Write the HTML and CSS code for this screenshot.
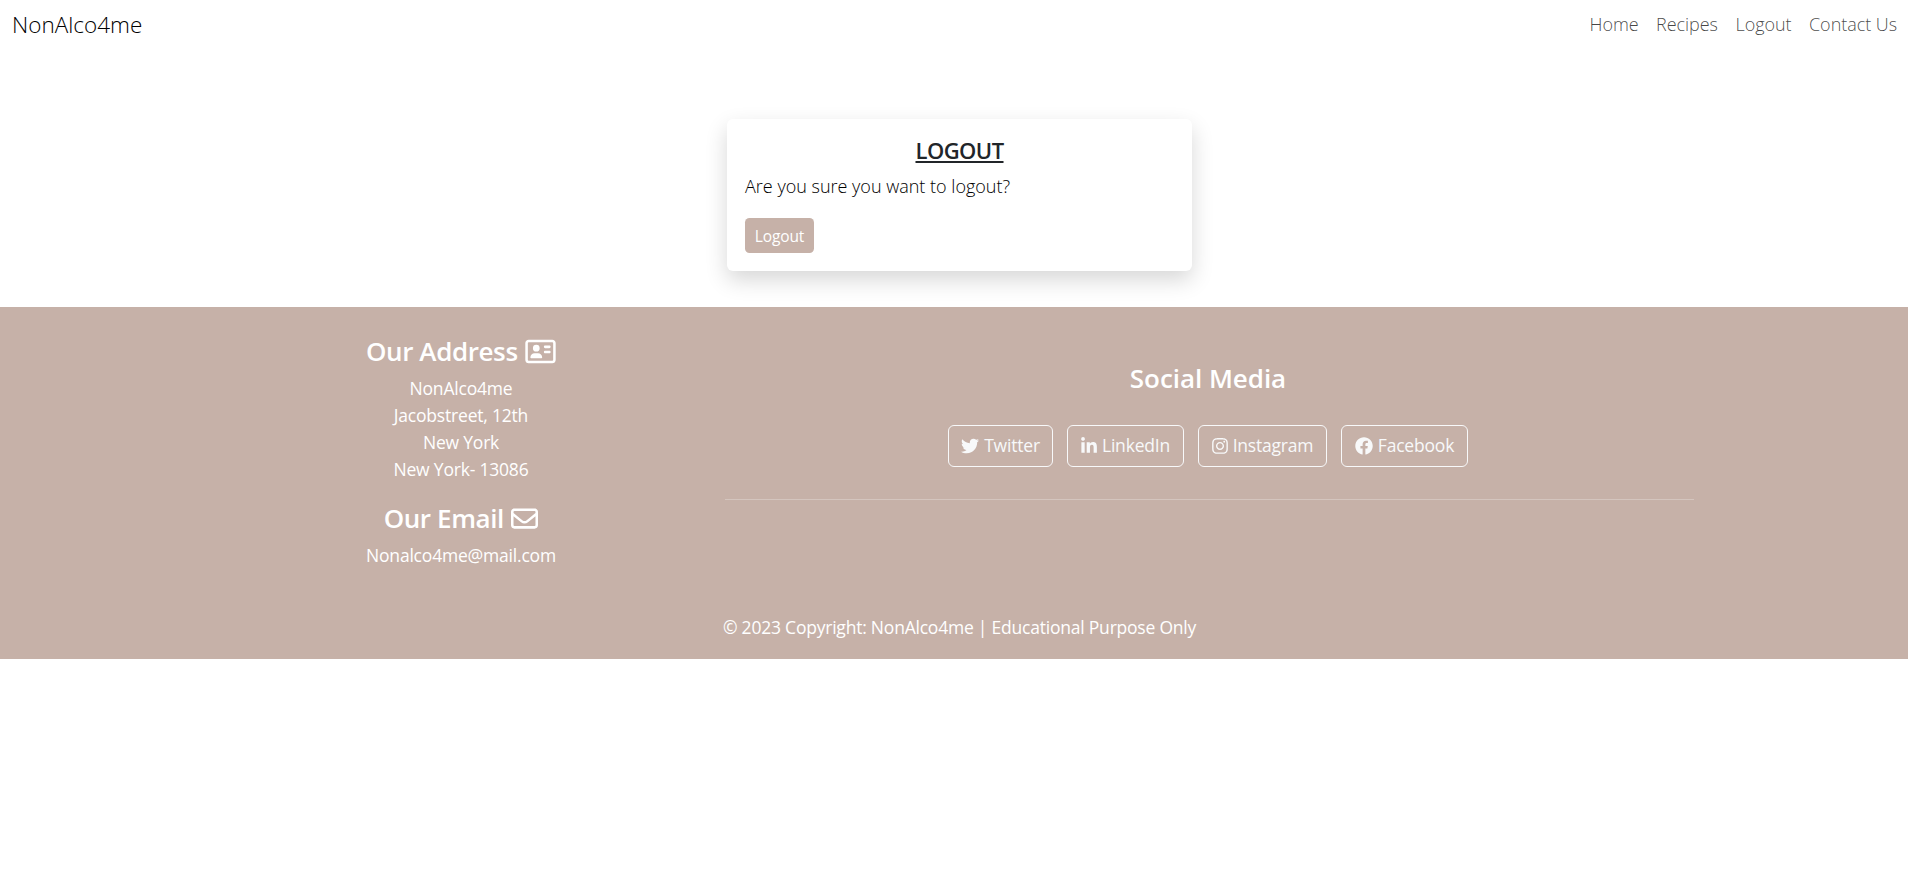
FILE: index.html
```html
<!DOCTYPE html>
<html lang="en">
<head>
<meta charset="utf-8">
<title>NonAlco4me</title>
<link rel="stylesheet" href="styles.css">
</head>
<body>
<nav class="navbar">
  <a class="brand">NonAlco4me</a>
  <ul class="nav-links">
    <li>Home</li>
    <li>Recipes</li>
    <li>Logout</li>
    <li>Contact Us</li>
  </ul>
</nav>
<main class="main">
  <section class="card">
    <h5 class="card-title">LOGOUT</h5>
    <p class="card-text">Are you sure you want to logout?</p>
    <button class="btn-logout">Logout</button>
  </section>
</main>
<footer class="footer">
  <div class="footer-cols">
    <div class="contact">
      <h4 class="heading">Our Address <svg class="icon" viewBox="0 0 576 512" width="31" height="27"><path d="M512 80c8.800 0 16 7.200 16 16V416c0 8.800-7.200 16-16 16H64c-8.800 0-16-7.200-16-16V96c0-8.800 7.200-16 16-16H512zM64 32C28.700 32 0 60.700 0 96V416c0 35.300 28.700 64 64 64H512c35.300 0 64-28.700 64-64V96c0-35.300-28.700-64-64-64H64zM208 256a64 64 0 1 0 0-128 64 64 0 1 0 0 128zm-32 32c-44.200 0-80 35.800-80 80c0 8.800 7.200 16 16 16H304c8.800 0 16-7.200 16-16c0-44.200-35.800-80-80-80H176zM376 144c-13.300 0-24 10.700-24 24s10.700 24 24 24h80c13.300 0 24-10.700 24-24s-10.700-24-24-24H376zm0 96c-13.300 0-24 10.700-24 24s10.700 24 24 24h80c13.300 0 24-10.700 24-24s-10.700-24-24-24H376z"/></svg></h4>
      <p class="lines">NonAlco4me<br>Jacobstreet, 12th<br>New York<br>New York- 13086</p>
      <h4 class="heading email">Our Email <svg class="icon" viewBox="0 0 512 512" width="27" height="27"><path d="M64 112c-8.800 0-16 7.200-16 16v22.100L220.500 291.700c20.700 17 50.400 17 71.100 0L464 150.100V128c0-8.800-7.200-16-16-16H64zM48 212.200V384c0 8.800 7.200 16 16 16H448c8.800 0 16-7.200 16-16V212.200L322 328.800c-38.400 31.500-93.700 31.500-132 0L48 212.200zM0 128C0 92.700 28.700 64 64 64H448c35.300 0 64 28.700 64 64V384c0 35.300-28.700 64-64 64H64c-35.300 0-64-28.700-64-64V128z"/></svg></h4>
      <p class="lines mail">Nonalco4me@mail.com</p>
    </div>
    <div class="social">
      <h4 class="heading social-title">Social Media</h4>
      <div class="buttons">
        <a class="btn tw"><svg class="icon" viewBox="0 0 512 512" width="18" height="18"><path d="M459.37 151.716c.325 4.548.325 9.097.325 13.645 0 138.72-105.583 298.558-298.558 298.558-59.452 0-114.68-17.219-161.137-47.106 8.447.974 16.568 1.299 25.34 1.299 49.055 0 94.213-16.568 130.274-44.832-46.132-.975-84.792-31.188-98.112-72.772 6.498.974 12.995 1.624 19.818 1.624 9.421 0 18.843-1.3 27.614-3.573-48.081-9.747-84.143-51.98-84.143-102.985v-1.299c13.969 7.797 30.214 12.67 47.431 13.319-28.264-18.843-46.781-51.005-46.781-87.391 0-19.492 5.197-37.36 14.294-52.954 51.655 63.675 129.3 105.258 216.365 109.807-1.624-7.797-2.599-15.918-2.599-24.04 0-57.828 46.782-104.934 104.934-104.934 30.213 0 57.502 12.67 76.67 33.137 23.715-4.548 46.456-13.32 66.599-25.34-7.798 24.366-24.366 44.833-46.132 57.827 21.117-2.273 41.584-8.122 60.426-16.243-14.292 20.791-32.161 39.308-52.628 54.253z"/></svg><span>Twitter</span></a>
        <a class="btn li"><svg class="icon" viewBox="0 0 448 512" width="16" height="18"><path d="M100.28 448H7.4V148.9h92.88zM53.79 108.1C24.09 108.1 0 83.5 0 53.8a53.79 53.79 0 0 1 107.58 0c0 29.7-24.1 54.3-53.79 54.3zM447.9 448h-92.68V302.4c0-34.7-.7-79.2-48.29-79.2-48.29 0-55.69 37.7-55.69 76.7V448h-92.78V148.9h89.08v40.8h1.3c12.4-23.5 42.69-48.3 87.88-48.3 94 0 111.28 61.9 111.28 142.3V448z"/></svg><span>LinkedIn</span></a>
        <a class="btn ig"><svg class="icon" viewBox="0 0 448 512" width="16" height="18"><path d="M224.1 141c-63.6 0-114.9 51.3-114.9 114.9s51.3 114.9 114.9 114.9S339 319.5 339 255.9 287.7 141 224.1 141zm0 189.6c-41.1 0-74.7-33.5-74.7-74.7s33.5-74.7 74.7-74.7 74.7 33.5 74.7 74.7-33.6 74.7-74.7 74.7zm146.4-194.3c0 14.9-12 26.8-26.8 26.8-14.9 0-26.8-12-26.8-26.8s12-26.8 26.8-26.8 26.8 12 26.8 26.8zm76.1 27.2c-1.7-35.9-9.9-67.7-36.2-93.9-26.2-26.2-58-34.4-93.9-36.2-37-2.1-147.9-2.1-184.9 0-35.8 1.7-67.6 9.9-93.9 36.1s-34.4 58-36.2 93.9c-2.1 37-2.1 147.9 0 184.9 1.7 35.9 9.9 67.7 36.2 93.9s58 34.4 93.9 36.2c37 2.1 147.9 2.1 184.9 0 35.9-1.7 67.7-9.9 93.9-36.2 26.2-26.2 34.4-58 36.2-93.9 2.1-37 2.1-147.8 0-184.8zM398.8 388c-7.8 19.6-22.9 34.7-42.6 42.6-29.5 11.7-99.5 9-132.1 9s-102.7 2.6-132.1-9c-19.6-7.8-34.7-22.9-42.6-42.6-11.7-29.5-9-99.5-9-132.1s-2.6-102.7 9-132.1c7.8-19.6 22.9-34.7 42.6-42.6 29.5-11.7 99.5-9 132.1-9s102.7-2.6 132.1 9c19.6 7.8 34.7 22.9 42.6 42.6 11.7 29.5 9 99.5 9 132.1s2.7 102.7-9 132.1z"/></svg><span>Instagram</span></a>
        <a class="btn fb"><svg class="icon" viewBox="0 0 512 512" width="18" height="18"><path d="M504 256C504 119 393 8 256 8S8 119 8 256c0 123.780 90.690 226.380 209.250 245V327.690h-63V256h63v-54.640c0-62.150 37-96.480 93.670-96.480 27.140 0 55.520 4.840 55.520 4.840v61h-31.280c-30.800 0-40.410 19.120-40.410 38.730V256h68.780l-11 71.690h-57.780V501C413.310 482.380 504 379.780 504 256z"/></svg><span>Facebook</span></a>
      </div>
      <hr class="rule">
    </div>
  </div>
  <p class="copyright">© 2023 Copyright: NonAlco4me | Educational Purpose Only</p>
</footer>
</body>
</html>
```
FILE: styles.css
```css
* { box-sizing: border-box; }
html { font-size: 18px; }
body { margin: 0; background: #fff; font-family: "Open Sans", "Noto Sans", sans-serif; font-size: 17.5px; line-height: 27px; color: #212529; }
h4, h5, p, ul { margin: 0; padding: 0; }

.navbar { display: flex; align-items: center; justify-content: space-between; height: 48px; padding: 0 11px 0 12px; font-weight: 300; }
.brand { font-size: 22.5px; color: #000; }
.nav-links { display: flex; gap: 17.5px; list-style: none; color: rgba(0, 0, 0, .72); font-size: 18px; letter-spacing: -.05px; }

.main { display: flex; justify-content: center; padding: 71px 0 36px 11px; }
.card { width: 465px; height: 152px; padding: 18px; border-radius: 6px; background: #fff; box-shadow: 0 9px 22px rgba(0, 0, 0, .16); }
.card-title { margin-bottom: 9px; text-align: center; font-size: 22px; line-height: 27px; font-weight: 600; letter-spacing: -.55px; text-decoration: underline; text-decoration-thickness: 2px; text-underline-offset: 2px; text-decoration-skip-ink: none; }
.card-text { margin-bottom: 18px; font-size: 18px; font-weight: 300; color: #000; }
.btn-logout { display: block; width: 69px; height: 35px; padding: 1px 0 0; border: 0; border-radius: 4.500px; background: #c6b1a8; color: #fff; font-family: inherit; font-size: 15.500px; letter-spacing: -.15px; }

.footer { height: 352px; padding-left: 11px; background: #c6b1a8; color: #fff; text-align: center; }
.footer-cols { display: grid; grid-template-columns: 485px 969px; justify-content: center; gap: 20px; height: 307px; margin-right: 6px; }
.heading { font-size: 26px; line-height: 32px; font-weight: 600; letter-spacing: -.4px; }
.icon { fill: currentColor; }
.heading .icon { vertical-align: -3.5px; margin-left: 1px; }
.contact { padding: 28px 2px 0 0; }
.lines { margin: 8px 0 19px; letter-spacing: -.2px; }
.email { letter-spacing: -.4px; }
.social { padding-top: 55px; }
.social-title { padding-right: 2px; letter-spacing: -.05px; }
.buttons { display: flex; justify-content: center; gap: 14px; margin-top: 31px; padding-right: 2px; }
.btn { display: flex; align-items: center; justify-content: center; gap: 5px; height: 42px; padding-bottom: 1px; border: 1px solid #f8f9fa; border-radius: 6px; color: #f8f9fa; letter-spacing: -.2px; }
.tw { width: 105px; }
.li { width: 117px; }
.ig { width: 129px; }
.fb { width: 127px; }
.rule { height: 1px; margin: 32px 0 0; border: 0; background: #d4c5be; }
.copyright { letter-spacing: -.22px; }
```
